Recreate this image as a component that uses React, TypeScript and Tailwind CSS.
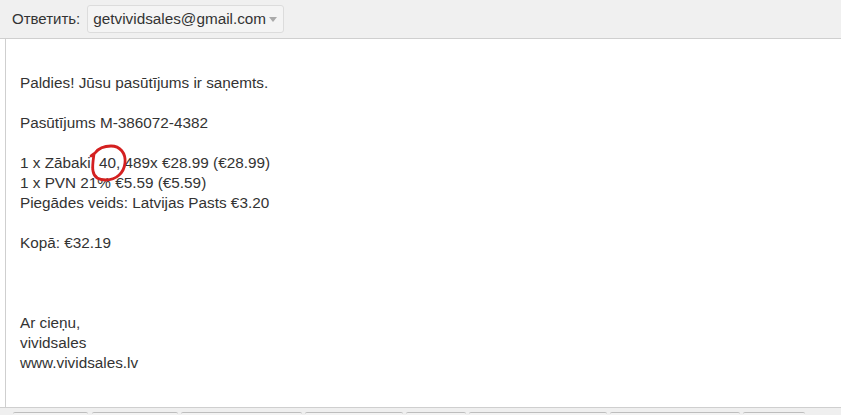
import React from "react";

const lines: string[] = [
  "Paldies! Jūsu pasūtījums ir saņemts.",
  "",
  "Pasūtījums M-386072-4382",
  "",
  "1 x Zābaki, 40, 489x €28.99 (€28.99)",
  "1 x PVN 21% €5.59 (€5.59)",
  "Piegādes veids: Latvijas Pasts €3.20",
  "",
  "Kopā: €32.19",
  "",
  "",
  "",
  "Ar cieņu,",
  "vividsales",
  "www.vividsales.lv",
];

// bottom toolbar buttons (left, right) in px
const buttons = [
  [13, 88],
  [92, 178],
  [181, 302],
  [305, 403],
  [406, 466],
  [469, 607],
  [610, 740],
  [743, 805],
];

const App = () => {
  return (
    <div
      className="w-[841px] h-[415px] overflow-hidden bg-white flex flex-col text-[#333]"
      style={{ fontFamily: '"Liberation Sans", Arial, sans-serif' }}
    >
      {/* Reply-to bar */}
      <div className="h-[39px] shrink-0 bg-[#f0f0f0] border-b border-[#cfcfcf] flex items-center pl-[12px] gap-[7px] text-[15px]">
        <span>Ответить:</span>
        <div className="h-[28px] w-[197px] bg-[#f4f4f4] border border-[#dcdcdc] rounded-[3px] flex items-center pl-[5px] pr-[6px] justify-between">
          <span className="text-[15.3px]">getvividsales@gmail.com</span>
          <svg width="8" height="5" viewBox="0 0 8 5">
            <path d="M0 0 L8 0 L4 5 Z" fill="#aaa" />
          </svg>
        </div>
      </div>

      {/* Message body */}
      <div className="flex-1 ml-[5px] border-l border-[#cfcfcf] relative">
        <div className="pt-[34px] pl-[14px] text-[15.3px] leading-[20px]">
          {lines.map((l, i) => (
            <div key={i} className="h-[20px] whitespace-pre">
              {l}
            </div>
          ))}
        </div>
        {/* red hand-drawn circle */}
        <svg
          className="absolute left-[80px] top-[104px]"
          width="44"
          height="40"
          viewBox="0 0 44 40"
        >
          <path
            d="M8 11 C7 18 6 24 7 28 C8 34 13 37 20 37 C30 37 38 30 39 20 C40 10 34 3 25 3 C17 3 12 6 9 10 C8 11 6 12 5 13"
            fill="none"
            stroke="#d42020"
            strokeWidth="2.8"
            strokeLinecap="round"
          />
        </svg>
      </div>

      {/* Bottom toolbar */}
      <div className="h-[8px] shrink-0 bg-[#efefef] border-t border-[#cfcfcf] relative">
        {buttons.map(([l, r], i) => (
          <div
            key={i}
            className="absolute top-[4px] h-[6px] border-t border-[#bdbdbd] bg-[#f3f3f3] rounded-t-[2px]"
            style={{ left: l, width: r - l }}
          />
        ))}
      </div>
    </div>
  );
};

export default App;
